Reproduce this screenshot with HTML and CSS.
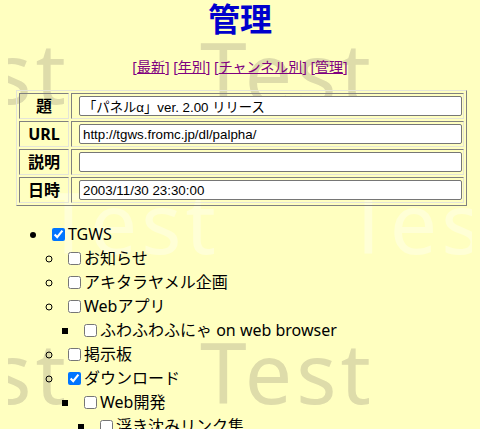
FILE: index.html
```html
<!DOCTYPE html>
<html lang="ja">
<head>
    <meta charset="UTF-8">
    <meta name="viewport" content="width=device-width, initial-scale=1.0">
    <title>管理</title>
    <link rel="stylesheet" href="styles.css">
</head>
<body>

    <!-- background watermark -->
    <div class="watermark" aria-hidden="true">
        <span class="mark dark" style="left:-105px; top:30px">Test</span>
        <span class="mark dark" style="left:200px; top:30px">Test</span>
        <span class="mark light" style="left:45px; top:180px">Test</span>
        <span class="mark light" style="left:345px; top:180px">Test</span>
        <span class="mark dark" style="left:-105px; top:330px">Test</span>
        <span class="mark dark" style="left:200px; top:330px">Test</span>
    </div>

    <h1 class="title">管理</h1>

    <p class="nav">[<a href="#">最新</a>] [<a href="#">年別</a>] [<a href="#">チャンネル別</a>] [<a href="#">管理</a>]</p>

    <form id="entryForm">
        <table class="entry">
            <tr>
                <th>題</th>
                <td><input type="text" name="title" value="「パネルα」ver. 2.00 リリース"></td>
            </tr>
            <tr>
                <th>URL</th>
                <td><input type="text" name="url" value="http://tgws.fromc.jp/dl/palpha/"></td>
            </tr>
            <tr>
                <th>説明</th>
                <td><input type="text" name="description" value=""></td>
            </tr>
            <tr>
                <th>日時</th>
                <td><input type="text" name="date" value="2003/11/30 23:30:00"></td>
            </tr>
        </table>

        <!-- channel tree -->
        <ul class="tree">
            <li><label><input type="checkbox" checked>TGWS</label>
                <ul>
                    <li><label><input type="checkbox">お知らせ</label></li>
                    <li><label><input type="checkbox">アキタラヤメル企画</label></li>
                    <li><label><input type="checkbox">Webアプリ</label>
                        <ul>
                            <li><label><input type="checkbox">ふわふわふにゃ on web browser</label></li>
                        </ul>
                    </li>
                    <li><label><input type="checkbox">掲示板</label></li>
                    <li><label><input type="checkbox" checked>ダウンロード</label>
                        <ul>
                            <li><label><input type="checkbox">Web開発</label>
                                <ul>
                                    <li><label><input type="checkbox">浮き沈みリンク集</label></li>
                                </ul>
                            </li>
                        </ul>
                    </li>
                </ul>
            </li>
        </ul>
    </form>

</body>
</html>
```

FILE: styles.css
```css
html {
    background-color: #ffffc0;
}

body {
    position: relative;
    margin: 0 8px 8px;
    font-family: 'Noto Sans', 'Noto Sans CJK JP', sans-serif;
    font-size: 16px;
    color: #000;
}

.watermark {
    position: absolute;
    top: 0;
    left: -8px;
    width: 480px;
    height: 429px;
    overflow: hidden;
    z-index: -1;
}

.mark {
    position: absolute;
    font-family: 'Noto Sans', sans-serif;
    font-size: 84px;
    line-height: 1;
    letter-spacing: 4px;
    white-space: nowrap;
}

.mark.dark {
    color: #dedcaa;
}

.mark.light {
    color: #ffffd6;
}

.title {
    margin: 0;
    text-align: center;
    font-size: 32px;
    line-height: 38px;
    font-weight: bold;
    color: #0000cc;
}

.nav {
    margin: 19px 0 13px;
    text-align: center;
    font-size: 14px;
    line-height: 20px;
    color: #800080;
}

.nav a {
    color: #800080;
}

form {
    margin: 0;
}

.entry {
    width: 451px;
    margin-left: 8px;
    border-collapse: separate;
    border-spacing: 2px;
    border: 1px solid;
    border-color: #e4e4d8 #808080 #808080 #e4e4d8;
}

.entry th,
.entry td {
    border: 1px solid;
    border-color: #808080 #e4e4d8 #e4e4d8 #808080;
}

.entry th {
    width: 48px;
    padding: 2px 0;
    text-align: center;
    font-size: 16px;
    line-height: 20px;
    font-weight: bold;
}

.entry td {
    padding: 2px 1px 2px 7px;
}

.entry input {
    display: block;
    width: 100%;
    height: 20px;
    box-sizing: border-box;
    margin: 0;
    padding: 1px 3px;
    font-family: 'Liberation Sans', 'Noto Sans CJK JP', sans-serif;
    font-size: 13.33px;
    background-color: #fff;
    border: 1px solid #767676;
    border-radius: 2px;
}

.tree {
    margin: 16px 0 0;
    padding-left: 40px;
    line-height: 24px;
}

.tree ul {
    margin: 0;
    padding-left: 16px;
}

.tree input {
    margin: 3px 3px 3px 4px;
    vertical-align: -1px;
}
```
